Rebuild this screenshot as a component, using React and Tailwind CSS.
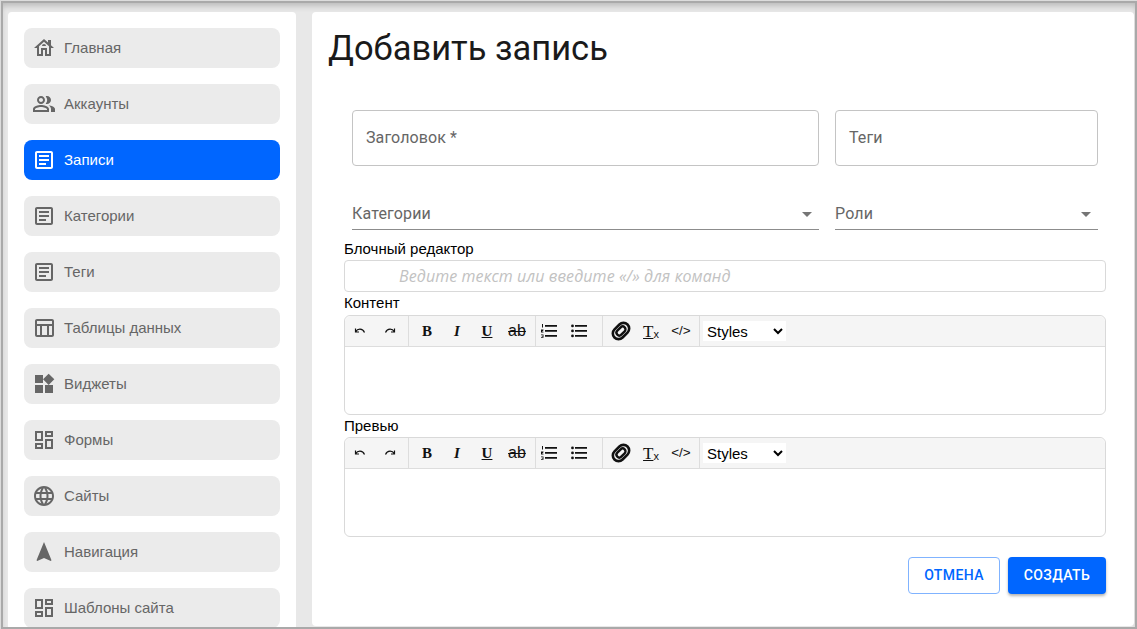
import {
  MdOutlineHouse,
  MdOutlinePeopleAlt,
  MdOutlineArticle,
  MdOutlineTableChart,
  MdWidgets,
  MdOutlineDashboard,
  MdLanguage,
  MdNavigation,
  MdArrowDropDown,
} from 'react-icons/md';

const menu = [
  { title: 'Главная', Icon: MdOutlineHouse },
  { title: 'Аккаунты', Icon: MdOutlinePeopleAlt },
  { title: 'Записи', Icon: MdOutlineArticle, active: true },
  { title: 'Категории', Icon: MdOutlineArticle },
  { title: 'Теги', Icon: MdOutlineArticle },
  { title: 'Таблицы данных', Icon: MdOutlineTableChart },
  { title: 'Виджеты', Icon: MdWidgets },
  { title: 'Формы', Icon: MdOutlineDashboard },
  { title: 'Сайты', Icon: MdLanguage },
  { title: 'Навигация', Icon: MdNavigation },
  { title: 'Шаблоны сайта', Icon: MdOutlineDashboard },
];

function SideItem({ title, Icon, active }) {
  return (
    <div className={`flex h-10 shrink-0 items-center rounded-lg pl-2 ${active ? 'bg-[#0066ff] text-white' : 'bg-[#ebebeb] text-[#666666]'}`}>
      <Icon className="h-6 w-6 shrink-0" />
      <span className="ml-2 font-['Liberation_Sans',sans-serif] text-[15px]">{title}</span>
    </div>
  );
}

function Outlined({ label, className }) {
  return (
    <div className={`flex h-14 items-center rounded border border-[#c4c4c4] px-[13px] text-[16px] tracking-[0.1px] text-[#666666] ${className}`}>
      {label}
    </div>
  );
}

function Picker({ label, className }) {
  return (
    <div className={`flex h-[34px] items-center justify-between border-b border-[#8c8c8c] pt-[2px] text-[16px] tracking-[0.15px] text-[#666666] ${className}`}>
      {label}
      <MdArrowDropDown className="h-6 w-6 text-[#757575]" />
    </div>
  );
}

function ToolBtn({ children, className = 'w-[30px]' }) {
  return <span className={`flex h-[30px] shrink-0 items-center justify-center text-[#111111] ${className}`}>{children}</span>;
}

function Sep() {
  return <span className="h-[30px] w-px shrink-0 bg-[#dddddd]" />;
}

function Editor() {
  return (
    <div className="h-[100px] rounded-md border border-[#d9d9d9]">
      <div className="flex h-[31px] items-center rounded-t-md border-b border-[#dddddd] bg-[#f5f5f5] font-['Liberation_Serif',serif] text-[15px]">
        <ToolBtn>
          <svg viewBox="0 0 14 14" className="h-[14px] w-[14px]" fill="none" stroke="currentColor" strokeWidth="1.2">
            <path d="M2.5 4.500v3.500H6M2.800 7.500C4.500 4.500 9.500 4 11.500 8.500" />
          </svg>
        </ToolBtn>
        <ToolBtn>
          <svg viewBox="0 0 14 14" className="h-[14px] w-[14px]" fill="none" stroke="currentColor" strokeWidth="1.2">
            <path d="M11.500 4.500v3.500H8M11.200 7.500C9.500 4.500 4.500 4 2.500 8.500" />
          </svg>
        </ToolBtn>
        <span className="w-[3px] shrink-0" />
        <Sep />
        <span className="w-[3px] shrink-0" />
        <ToolBtn><b>B</b></ToolBtn>
        <ToolBtn><b><i>I</i></b></ToolBtn>
        <ToolBtn><b className="underline">U</b></ToolBtn>
        <ToolBtn><span className="font-['Liberation_Sans',sans-serif] text-[16px] line-through">ab</span></ToolBtn>
        <span className="w-[3px] shrink-0" />
        <Sep />
        <ToolBtn className="w-[26px]">
          <svg viewBox="0 0 16 14" className="h-[14px] w-4" fill="currentColor">
            <path d="M4 1h12v1.800H4zM4 6h12v1.800H4zM4 11h12v1.800H4z" />
            <path d="M1 0h1v3.500H1zM0 5.500h2.500v.8L1 7.800h1.500v.7H0zM0 10.500h2.500v3.300H0v-.7h1.700v-.6H.8v-.6h.9v-.7H0z" />
          </svg>
        </ToolBtn>
        <span className="w-[2px] shrink-0" />
        <ToolBtn>
          <svg viewBox="0 0 16 14" className="h-[14px] w-4" fill="currentColor">
            <circle cx="1.500" cy="1.900" r="1.400" />
            <circle cx="1.500" cy="6.900" r="1.400" />
            <circle cx="1.500" cy="11.900" r="1.400" />
            <path d="M4 1h12v1.800H4zM4 6h12v1.800H4zM4 11h12v1.800H4z" />
          </svg>
        </ToolBtn>
        <span className="w-[8px] shrink-0" />
        <Sep />
        <span className="w-[3px] shrink-0" />
        <ToolBtn>
          <svg viewBox="0 0 20 20" className="h-5 w-5" fill="none" stroke="currentColor">
            <g transform="rotate(-45 10 10)">
              <rect x="0.800" y="4.300" width="18.400" height="11.400" rx="5.700" strokeWidth="2.600" />
              <rect x="4.800" y="7.200" width="10.400" height="5.600" rx="2.800" strokeWidth="2.400" />
            </g>
          </svg>
        </ToolBtn>
        <ToolBtn>
          <span className="text-[17px] leading-none underline">T</span>
          <span className="mt-[7px] font-['Liberation_Sans',sans-serif] text-[11px] leading-none">x</span>
        </ToolBtn>
        <ToolBtn><span className="font-['Liberation_Sans',sans-serif] text-[13.500px]">&lt;/&gt;</span></ToolBtn>
        <span className="w-[3px] shrink-0" />
        <Sep />
        <select className="ml-[3px] h-5 w-[83px] bg-white font-['Liberation_Sans',sans-serif] text-[15px] text-black">
          <option>Styles</option>
        </select>
      </div>
    </div>
  );
}

export default function App() {
  return (
    <div className="h-[629px] w-[1137px] overflow-hidden bg-[#dcdcdc] pl-px pt-px">
      <div className="flex h-[628px] w-[1136px] gap-4 overflow-hidden border-2 border-[#a9a9a9] bg-[#e8e8e8] pl-[5px] pr-[1px] pt-[9px] font-['Roboto',sans-serif] shadow-[inset_0_5px_6px_-2px_rgba(0,0,0,0.2)]">
        <aside className="flex w-[288px] shrink-0 flex-col gap-4 overflow-hidden rounded-t bg-white px-4 pt-4">
          {menu.map(item => <SideItem key={item.title} {...item} />)}
        </aside>
        <main className="mb-[1px] flex flex-1 flex-col rounded bg-white pl-8 pr-7">
          <h1 className="-ml-4 mt-[14px] text-[34.500px] leading-[44px] text-[#1a1a1a]">Добавить запись</h1>
          <div className="mt-[40px] flex gap-4 pl-2">
            <Outlined label="Заголовок *" className="w-[467px]" />
            <Outlined label="Теги" className="w-[263px]" />
          </div>
          <div className="mt-[30px] flex gap-4 pl-2">
            <Picker label="Категории" className="w-[467px]" />
            <Picker label="Роли" className="w-[263px]" />
          </div>
          <div className="font-['Liberation_Sans',sans-serif] text-[15px] text-black">
            <p className="mb-[1px] mt-[9px] leading-[20px]">Блочный редактор</p>
            <div className="flex h-8 items-center rounded border border-[#d9d9d9] pl-[54px] font-['Open_Sans',sans-serif] text-[16px] italic tracking-[0.1px] text-[#c2c2c2]">
              Ведите текст или введите «/» для команд
            </div>
            <p className="mb-[1px] leading-[22px]">Контент</p>
            <Editor />
            <p className="leading-[22px]">Превью</p>
            <Editor />
          </div>
          <div className="mt-5 flex justify-end gap-2 text-[14px] font-medium tracking-[0.4px]">
            <button className="h-[37px] w-[92px] rounded border border-[#80b3ff] text-[#0066ff]">ОТМЕНА</button>
            <button className="h-[37px] w-[98px] rounded bg-[#0066ff] text-white shadow-[0_2px_3px_rgba(0,0,0,0.3)]">СОЗДАТЬ</button>
          </div>
        </main>
      </div>
    </div>
  );
}
